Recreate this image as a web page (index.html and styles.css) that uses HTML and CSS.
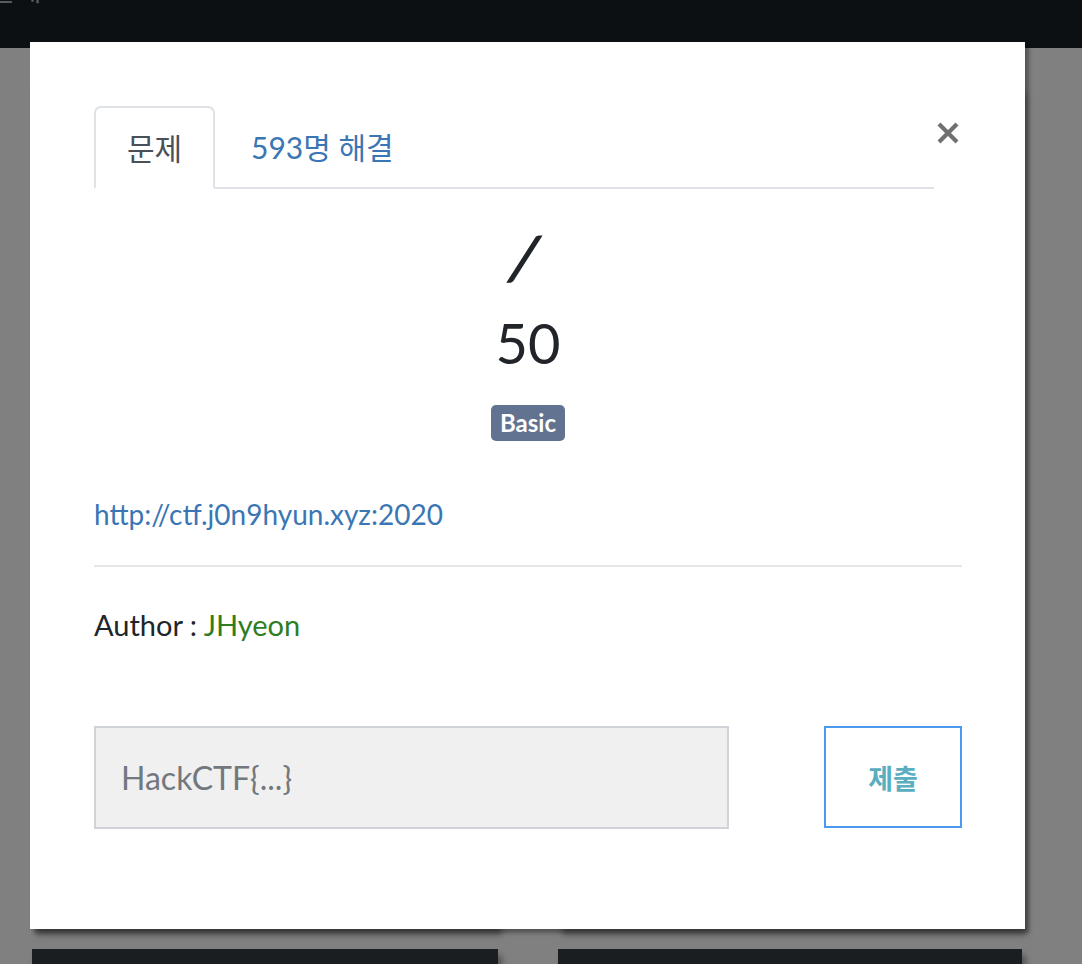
FILE: index.html
```html
<!DOCTYPE html>
<html lang="ko">
<head>
<meta charset="utf-8">
<title>문제</title>
<link rel="stylesheet" href="styles.css">
</head>
<body>
<header class="navbar"><span class="nav-title">문제</span></header>
<main class="board">
  <div class="card"></div>
  <div class="card"></div>
  <div class="card"></div>
  <div class="card"></div>
</main>
<div class="modal">
  <div class="modal-head">
    <ul class="tabs">
      <li class="tab active">문제</li>
      <li class="tab link">593명 해결</li>
    </ul>
    <button class="close" aria-label="close">
      <svg width="24" height="24" viewBox="0 0 24 24"><path d="M3 3 L21 21 M21 3 L3 21" stroke="#707070" stroke-width="4.2" fill="none"/></svg>
    </button>
  </div>
  <div class="challenge">
    <h2 class="name"><span class="slash">/</span></h2>
    <h3 class="value">50</h3>
    <span class="badge">Basic</span>
  </div>
  <div class="desc">
    <p class="url"><a href="#">http://ctf.j0n9hyun.xyz:2020</a></p>
    <hr class="rule">
    <p class="author">Author : <span class="green">JHyeon</span></p>
  </div>
  <form class="submit-row">
    <input class="flag" type="text" placeholder="HackCTF{...}">
    <button class="submit" type="button">제출</button>
  </form>
</div>
</body>
</html>
```
FILE: styles.css
```css
html, body {
  margin: 0;
  padding: 0;
}
body {
  background: #808080;
  font-family: Lato, "Noto Sans CJK KR", sans-serif;
  width: 1082px;
  height: 964px;
  overflow: hidden;
  position: relative;
}
.navbar {
  height: 48px;
  background: #0d1012;
  overflow: hidden;
}
.nav-title {
  display: block;
  margin-top: -25px;
  margin-left: -10px;
  font-size: 28px;
  line-height: 30px;
  color: #5a5d60;
}
.board {
  display: grid;
  grid-template-columns: 466px 464px;
  column-gap: 60px;
  row-gap: 20px;
  padding: 40px 0 0 32px;
}
.card {
  height: 841px;
  background: #1b1e21;
  box-shadow: 4px 6px 6px rgba(0,0,0,0.35);
}
.modal {
  position: absolute;
  left: 30px;
  top: 42px;
  width: 995px;
  height: 887px;
  background: #fff;
  box-shadow: 4px 4px 4px rgba(0,0,0,0.35);
  box-sizing: border-box;
  padding: 64px 63px 0 64px;
  display: flex;
  flex-direction: column;
}
.modal-head {
  display: flex;
  align-items: flex-start;
}
.tabs {
  list-style: none;
  margin: 0;
  padding: 0;
  flex: 1;
  display: flex;
  border-bottom: 2px solid #dee2e6;
  height: 81px;
}
.tab {
  font-family: Lato, "Noto Sans CJK KR", sans-serif;
  font-size: 30px;
  line-height: 83px;
  height: 81px;
  box-sizing: border-box;
}
.tab.active {
  width: 121px;
  text-align: center;
  color: #495057;
  border: 2px solid #dee2e6;
  border-bottom: 2px solid #fff;
  border-radius: 7px 7px 0 0;
  height: 83px;
  line-height: 81px;
  background: #fff;
}
.tab.link {
  color: #3b76b4;
  padding-left: 36px;
}
.close {
  border: 0;
  background: none;
  padding: 0;
  margin-top: 14px;
  width: 28px;
  height: 26px;
  display: flex;
  align-items: center;
  justify-content: center;
}
.challenge {
  display: flex;
  flex-direction: column;
  align-items: center;
  color: #212529;
}
.name {
  margin: 38px 0 0;
  height: 60px;
  font-size: 60px;
  font-weight: 700;
  line-height: 60px;
}
.slash {
  display: inline-block;
  margin-left: -6px;
  transform: skewX(-14deg);
}
.value {
  margin: 26px 0 0;
  font-size: 56px;
  font-weight: 400;
  line-height: 60px;
}
.badge {
  margin-top: 32px;
  background: #627391;
  color: #fff;
  font-weight: 700;
  font-size: 24px;
  line-height: 36px;
  height: 36px;
  padding: 0 9px;
  border-radius: 5px;
}
.desc {
  margin-top: 52px;
}
.url {
  margin: 0;
  font-size: 28px;
  line-height: 42px;
}
.url a {
  color: #3b76b4;
  text-decoration: none;
}
.rule {
  border: 0;
  border-top: 2px solid #e6e6e6;
  margin: 30px 0 0;
}
.author {
  margin: 37px 0 0;
  font-size: 29px;
  line-height: 42px;
  color: #212529;
}
.green {
  color: #2e7d1f;
}
.submit-row {
  margin-top: 80px;
  display: flex;
  justify-content: space-between;
  align-items: flex-start;
}
.flag {
  width: 635px;
  height: 103px;
  box-sizing: border-box;
  background: #f0f0f0;
  border: 2px solid #d0d4d8;
  padding: 0 25px;
  font-family: Lato, "Noto Sans CJK KR", sans-serif;
  font-size: 32px;
  color: #495057;
  outline: none;
}
.flag::placeholder {
  color: #72787e;
}
.submit {
  width: 138px;
  height: 102px;
  box-sizing: border-box;
  background: #fff;
  border: 2px solid #4a9bef;
  color: #5aaebf;
  font-family: "Noto Sans CJK KR", sans-serif;
  font-weight: 700;
  font-size: 27px;
  padding: 0;
}
```
